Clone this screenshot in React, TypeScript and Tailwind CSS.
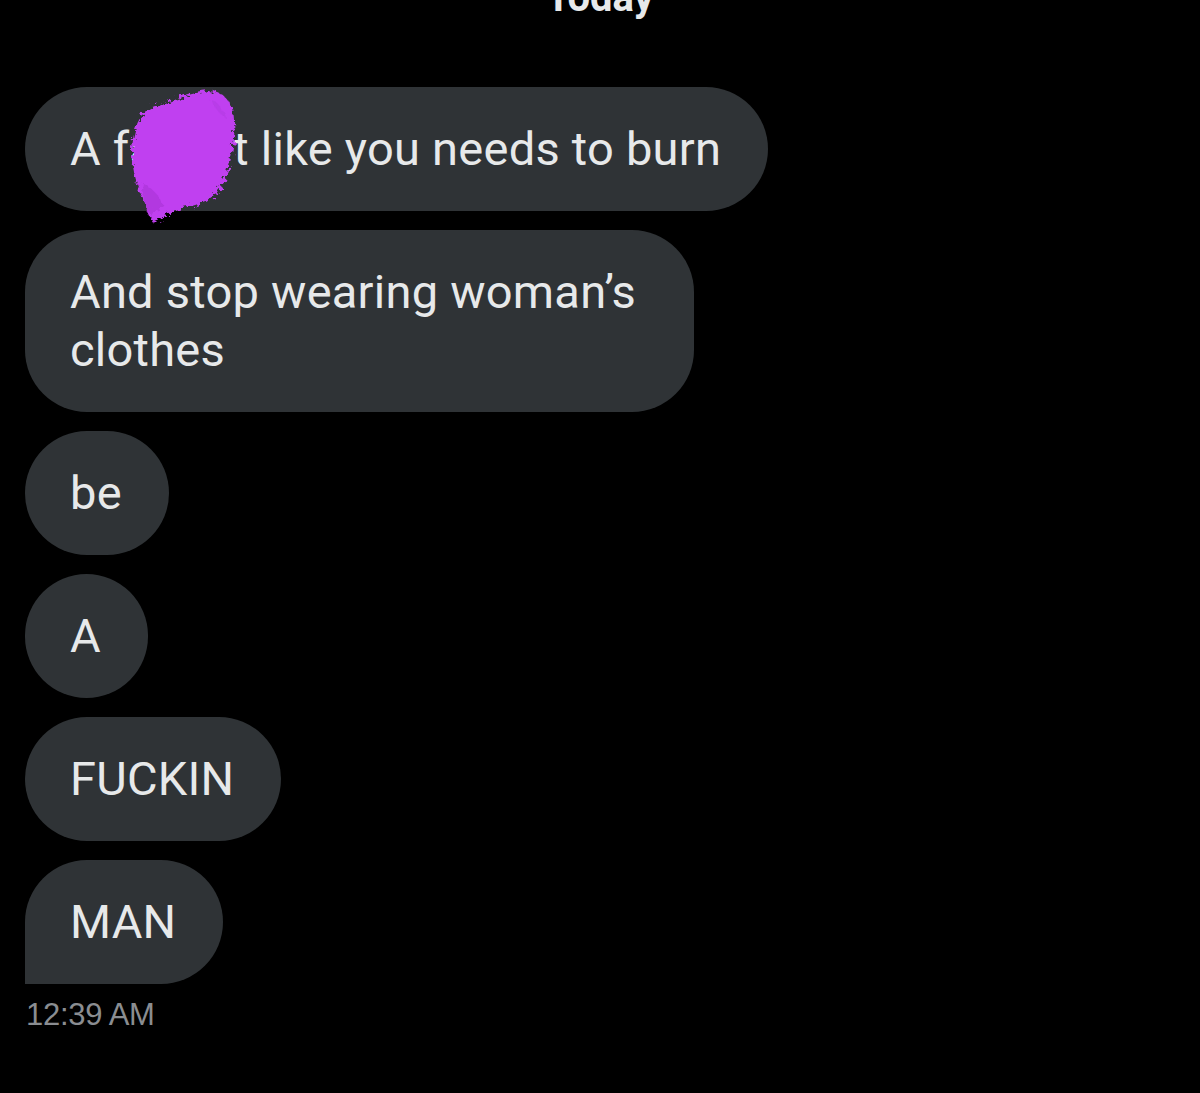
import React from "react";

const bubble =
  "bg-[#2f3336] text-[#e7e9ea] text-[47px] tracking-[0.25px] leading-[58px] pl-[45px] pr-[47px] py-[33px]";

function Blob() {
  return (
    <svg
      className="absolute left-[124px] top-[84px] pointer-events-none"
      width="120"
      height="144"
      viewBox="0 0 120 144"
    >
      <defs>
        <filter id="rough" x="-20%" y="-20%" width="140%" height="140%">
          <feTurbulence type="fractalNoise" baseFrequency="0.22" numOctaves="3" seed="7" />
          <feDisplacementMap in="SourceGraphic" scale="10" />
        </filter>
      </defs>
      <g filter="url(#rough)">
        <path
          fill="#c03ff0"
          d="M78 8 C96 4 110 16 110 36 C112 58 106 82 100 98 C92 114 78 120 60 124 C48 128 38 134 28 138 C22 122 14 106 10 88 C6 70 8 48 16 34 C24 20 42 20 56 14 C64 11 70 9 78 8 Z"
        />
        <path fill="#a533d4" opacity="0.55" d="M20 100 C28 104 36 112 40 124 C34 126 28 128 24 130 C20 120 18 110 20 100 Z" />
        <path fill="#b23be2" opacity="0.6" d="M86 14 C94 18 100 26 102 34 C96 30 90 24 86 14 Z" />
      </g>
    </svg>
  );
}

export default function App() {
  return (
    <div
      className="relative min-h-[1093px] w-full overflow-hidden bg-black"
      style={{ fontFamily: "Roboto, 'Noto Sans', sans-serif" }}
    >
      <div className="h-[87px] flex justify-center">
        <span className="-mt-[22px] h-[40px] text-[40px] font-bold leading-none text-[#e7e9ea]">
          Today
        </span>
      </div>

      <div className="flex flex-col items-start gap-[19px] pl-[25px]">
        <div className={`${bubble} rounded-[62px] flex`}>
          <span>A fa</span>
          <span className="inline-block w-[78px]" />
          <span>t like you needs to burn</span>
        </div>
        <div className={`${bubble} rounded-[62px] w-[669px]`}>
          And stop wearing woman’s clothes
        </div>
        <div className={`${bubble} rounded-[62px]`}>be</div>
        <div className={`${bubble} rounded-[62px]`}>A</div>
        <div className={`${bubble} rounded-[62px]`}>FUCKIN</div>
        <div className={`${bubble} rounded-[62px] rounded-bl-none`}>MAN</div>
      </div>

      <div
        className="pl-[26px] pt-[15px] text-[31px] leading-none tracking-[-0.3px] text-[#8a8d91]"
        style={{ fontFamily: "'Liberation Sans', Arial, sans-serif" }}
      >
        12:39 AM
      </div>

      <Blob />
    </div>
  );
}
